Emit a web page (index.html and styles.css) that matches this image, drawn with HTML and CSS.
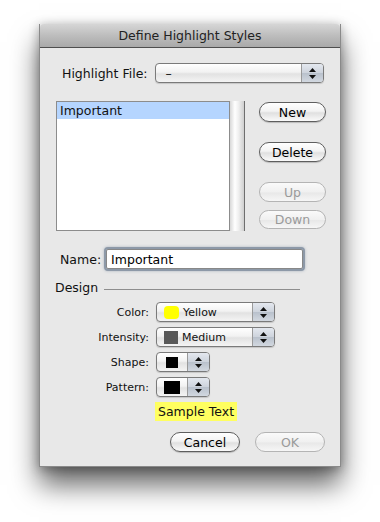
FILE: index.html
```html
<!DOCTYPE html>
<html lang="en">
<head>
    <meta charset="UTF-8">
    <title>Define Highlight Styles</title>
    <link rel="stylesheet" href="styles.css">
</head>
<body>
    <div class="dialog">
        <div class="titlebar">Define Highlight Styles</div>

        <div class="file-row">
            <span class="label">Highlight File:</span>
            <div class="popup file-popup">
                <span class="popup-text">&ndash;</span>
                <span class="popup-arrows"><svg width="7" height="11" viewBox="0 0 7 11"><path d="M3.5 0L7 4H0z M0 7h7l-3.5 4z" fill="#111"/></svg></span>
            </div>
        </div>

        <div class="list-row">
            <div class="list-wrap">
                <div class="list">
                    <div class="list-item selected">Important</div>
                </div>
                <div class="scroll"></div>
            </div>
            <div class="side-buttons">
                <button class="btn">New</button>
                <button class="btn delete">Delete</button>
                <button class="btn up" disabled>Up</button>
                <button class="btn down" disabled>Down</button>
            </div>
        </div>

        <div class="name-row">
            <span class="label">Name:</span>
            <input class="name-input" type="text" value="Important">
        </div>

        <div class="design">
            <span>Design</span>
            <span class="rule"></span>
        </div>

        <div class="form">
            <span class="label">Color:</span>
            <div class="popup wide">
                <span class="swatch yellow"></span>
                <span class="popup-text">Yellow</span>
                <span class="popup-arrows"><svg width="7" height="11" viewBox="0 0 7 11"><path d="M3.5 0L7 4H0z M0 7h7l-3.5 4z" fill="#111"/></svg></span>
            </div>

            <span class="label">Intensity:</span>
            <div class="popup wide">
                <span class="swatch grey"></span>
                <span class="popup-text">Medium</span>
                <span class="popup-arrows"><svg width="7" height="11" viewBox="0 0 7 11"><path d="M3.5 0L7 4H0z M0 7h7l-3.5 4z" fill="#111"/></svg></span>
            </div>

            <span class="label">Shape:</span>
            <div class="popup narrow">
                <span class="swatch shape"></span>
                <span class="popup-arrows"><svg width="7" height="11" viewBox="0 0 7 11"><path d="M3.5 0L7 4H0z M0 7h7l-3.5 4z" fill="#111"/></svg></span>
            </div>

            <span class="label">Pattern:</span>
            <div class="popup narrow">
                <span class="swatch pattern"></span>
                <span class="popup-arrows"><svg width="7" height="11" viewBox="0 0 7 11"><path d="M3.5 0L7 4H0z M0 7h7l-3.5 4z" fill="#111"/></svg></span>
            </div>
        </div>

        <div class="sample-row">
            <span class="sample">Sample Text</span>
        </div>

        <div class="footer">
            <button class="btn">Cancel</button>
            <button class="btn" disabled>OK</button>
        </div>
    </div>
</body>
</html>
```

FILE: styles.css
```css
html {
    background: #fff;
}

body {
    margin: 0;
    padding: 24px 0 56px;
    font-family: 'DejaVu Sans', 'Liberation Sans', sans-serif;
    font-size: 12px;
    color: #111;
}

.dialog {
    width: 300px;
    height: 442px;
    margin-left: 39px;
    background: #e8e8e8;
    border: 1px solid #8a8a8a;
    border-top: none;
    box-shadow: 0 18px 26px rgba(0, 0, 0, 0.6), 0 2px 10px rgba(0, 0, 0, 0.3);
}

.titlebar {
    height: 23px;
    line-height: 23px;
    text-align: center;
    font-size: 12.5px;
    color: #222;
    background: linear-gradient(#d6d6d6, #bdbdbd 50%, #a9a9a9);
    border-bottom: 1px solid #4e4e4e;
    border-radius: 4px 4px 0 0;
}

.label {
    white-space: nowrap;
}

/* popup menus */
.popup {
    display: flex;
    align-items: center;
    height: 18px;
    border: 1px solid #7a7a7a;
    border-radius: 4px;
    background: linear-gradient(#ffffff, #f2f2f2 45%, #e2e2e2 55%, #f4f4f4);
    box-shadow: 0 1px 1px rgba(0, 0, 0, 0.15);
    overflow: hidden;
}

.popup-text {
    flex: 1;
    padding-left: 8px;
}

.popup-arrows {
    width: 21px;
    height: 18px;
    display: flex;
    align-items: center;
    justify-content: center;
    border-left: 1px solid #9a9a9a;
    background: linear-gradient(#e4e8ef, #cdd3dc 50%, #b9c1cc 52%, #d2d8e0);
}

.file-row {
    display: flex;
    align-items: center;
    margin-top: 15px;
    padding-left: 22px;
    gap: 7px;
    font-size: 12.5px;
}

.file-popup {
    width: 167px;
}

.file-popup .popup-text {
    padding-left: 10px;
}

/* list */
.list-row {
    display: flex;
    margin-top: 18px;
    padding-left: 16px;
}

.list-wrap {
    display: flex;
    height: 130px;
}

.list {
    width: 172px;
    border: 1px solid #8c8c8c;
    background: #fff;
}

.list-item {
    height: 17px;
    line-height: 17px;
    padding-left: 3px;
    font-size: 12.5px;
}

.list-item.selected {
    background: #b5d5ff;
}

.scroll {
    width: 14px;
    border-right: 1px solid #6e6e6e;
    background: linear-gradient(90deg, #d8d8d8, #ffffff 35%, #f0f0f0 60%, #cfcfcf);
}

.side-buttons {
    display: flex;
    flex-direction: column;
    margin-left: 14px;
    padding-top: 1px;
}

.btn {
    width: 67px;
    height: 20px;
    padding: 0;
    font-family: inherit;
    font-size: 12.5px;
    color: #000;
    border: 1px solid #5e5e5e;
    border-radius: 10px;
    background: linear-gradient(#ffffff, #f3f3f3 45%, #e0e0e0 55%, #fafafa);
    box-shadow: 0 1px 1px rgba(0, 0, 0, 0.2);
}

.btn:disabled {
    color: #9a9a9a;
    border-color: #b4b4b4;
    box-shadow: none;
    background: linear-gradient(#fafafa, #f0f0f0 50%, #e8e8e8 55%, #f6f6f6);
}

.side-buttons .delete {
    margin-top: 20px;
}

.side-buttons .up {
    margin-top: 20px;
}

.side-buttons .down {
    margin-top: 8px;
    height: 19px;
}

/* name */
.name-row {
    display: flex;
    align-items: center;
    margin-top: 18px;
    padding-left: 20px;
    gap: 5px;
    font-size: 12.5px;
}

.name-input {
    width: 187px;
    height: 18px;
    padding: 0 4px;
    font-family: inherit;
    font-size: 12.5px;
    color: #000;
    border: 1px solid #888;
    background: #fff;
    outline: 2px solid #8d99a8;
    box-shadow: 0 0 3px 2px #a9b3bf;
    border-radius: 2px;
}

.design {
    display: flex;
    align-items: center;
    margin-top: 11px;
    padding-left: 15px;
    gap: 6px;
    font-size: 12.5px;
}

.rule {
    width: 196px;
    height: 1px;
    margin-top: 4px;
    background: #8e8e8e;
}

/* design form */
.form {
    display: grid;
    grid-template-columns: 109px auto;
    justify-content: start;
    align-items: center;
    row-gap: 5px;
    column-gap: 7px;
    margin-top: 7px;
    font-size: 11px;
}

.form .label {
    text-align: right;
}

.wide {
    width: 117px;
}

.narrow {
    width: 52px;
}

.narrow .popup-arrows {
    margin-left: auto;
}

.swatch {
    display: inline-block;
    margin-left: 7px;
}

.swatch + .popup-text {
    padding-left: 4px;
}

.yellow {
    width: 15px;
    height: 13px;
    border-radius: 4px;
    background: #ffff00;
}

.grey {
    width: 14px;
    height: 13px;
    background: #585858;
}

.shape {
    width: 12px;
    height: 11px;
    margin-left: 9px;
    background: #000;
}

.pattern {
    width: 16px;
    height: 13px;
    background: #000;
}

.sample-row {
    margin-top: 5px;
    padding-left: 115px;
}

.sample {
    display: inline-block;
    height: 19px;
    line-height: 19px;
    padding: 0 3px;
    font-size: 12.5px;
    background: #ffff60;
}

.footer {
    display: flex;
    gap: 15px;
    margin-top: 11px;
    padding-left: 130px;
}

.footer .btn {
    width: 70px;
}
```
